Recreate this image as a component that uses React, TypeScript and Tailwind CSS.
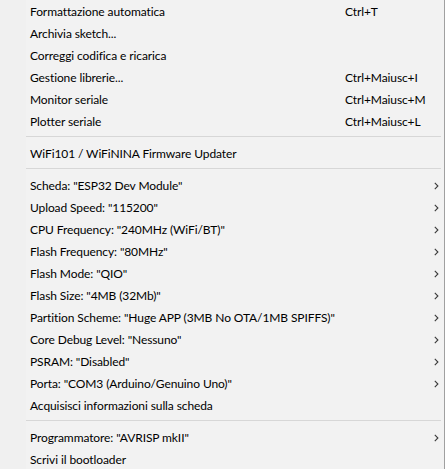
import React from 'react';

type Item =
  | { kind: 'sep' }
  | { kind: 'item'; label: string; shortcut?: string; submenu?: boolean };

const items: Item[] = [
  { kind: 'item', label: 'Formattazione automatica', shortcut: 'Ctrl+T' },
  { kind: 'item', label: 'Archivia sketch...' },
  { kind: 'item', label: 'Correggi codifica e ricarica' },
  { kind: 'item', label: 'Gestione librerie...', shortcut: 'Ctrl+Maiusc+I' },
  { kind: 'item', label: 'Monitor seriale', shortcut: 'Ctrl+Maiusc+M' },
  { kind: 'item', label: 'Plotter seriale', shortcut: 'Ctrl+Maiusc+L' },
  { kind: 'sep' },
  { kind: 'item', label: 'WiFi101 / WiFiNINA Firmware Updater' },
  { kind: 'sep' },
  { kind: 'item', label: 'Scheda: "ESP32 Dev Module"', submenu: true },
  { kind: 'item', label: 'Upload Speed: "115200"', submenu: true },
  { kind: 'item', label: 'CPU Frequency: "240MHz (WiFi/BT)"', submenu: true },
  { kind: 'item', label: 'Flash Frequency: "80MHz"', submenu: true },
  { kind: 'item', label: 'Flash Mode: "QIO"', submenu: true },
  { kind: 'item', label: 'Flash Size: "4MB (32Mb)"', submenu: true },
  { kind: 'item', label: 'Partition Scheme: "Huge APP (3MB No OTA/1MB SPIFFS)"', submenu: true },
  { kind: 'item', label: 'Core Debug Level: "Nessuno"', submenu: true },
  { kind: 'item', label: 'PSRAM: "Disabled"', submenu: true },
  { kind: 'item', label: 'Porta: "COM3 (Arduino/Genuino Uno)"', submenu: true },
  { kind: 'item', label: 'Acquisisci informazioni sulla scheda' },
  { kind: 'sep' },
  { kind: 'item', label: 'Programmatore: "AVRISP mkII"', submenu: true },
  { kind: 'item', label: 'Scrivi il bootloader' },
];

const Chevron = () => (
  <svg width="5" height="8" viewBox="0 0 5 8" className="block">
    <path d="M0.8 0.8 L3.9 4 L0.8 7.2" fill="none" stroke="#3a3a3a" strokeWidth="1.1" />
  </svg>
);

export default function App() {
  return (
    <div
      className="relative w-[445px] h-[469px] overflow-hidden bg-[#f2f2f2] border-r border-[#a0a0a0] text-[12px] tracking-[-0.1px] text-black"
      style={{ fontFamily: 'Lato, "Noto Sans", sans-serif' }}
    >
      {/* left icon gutter */}
      <div className="absolute left-0 top-0 bottom-0 w-[26px] bg-[#f0f0f0]" />
      <div className="relative pt-[1px]">
        {items.map((it, i) =>
          it.kind === 'sep' ? (
            <div key={i} className="h-[10px] pt-[3px] pl-[26px] pr-[3px]">
              <div className="h-px bg-[#d7d7d7]" />
            </div>
          ) : (
            <div key={i} className="flex items-center h-[22px] pl-[30px] leading-none">
              <span className="w-[315px] shrink-0 whitespace-nowrap">{it.label}</span>
              {it.shortcut && <span className="whitespace-nowrap">{it.shortcut}</span>}
              {it.submenu && (
                <span className="ml-auto mr-[5px]">
                  <Chevron />
                </span>
              )}
            </div>
          )
        )}
      </div>
    </div>
  );
}
